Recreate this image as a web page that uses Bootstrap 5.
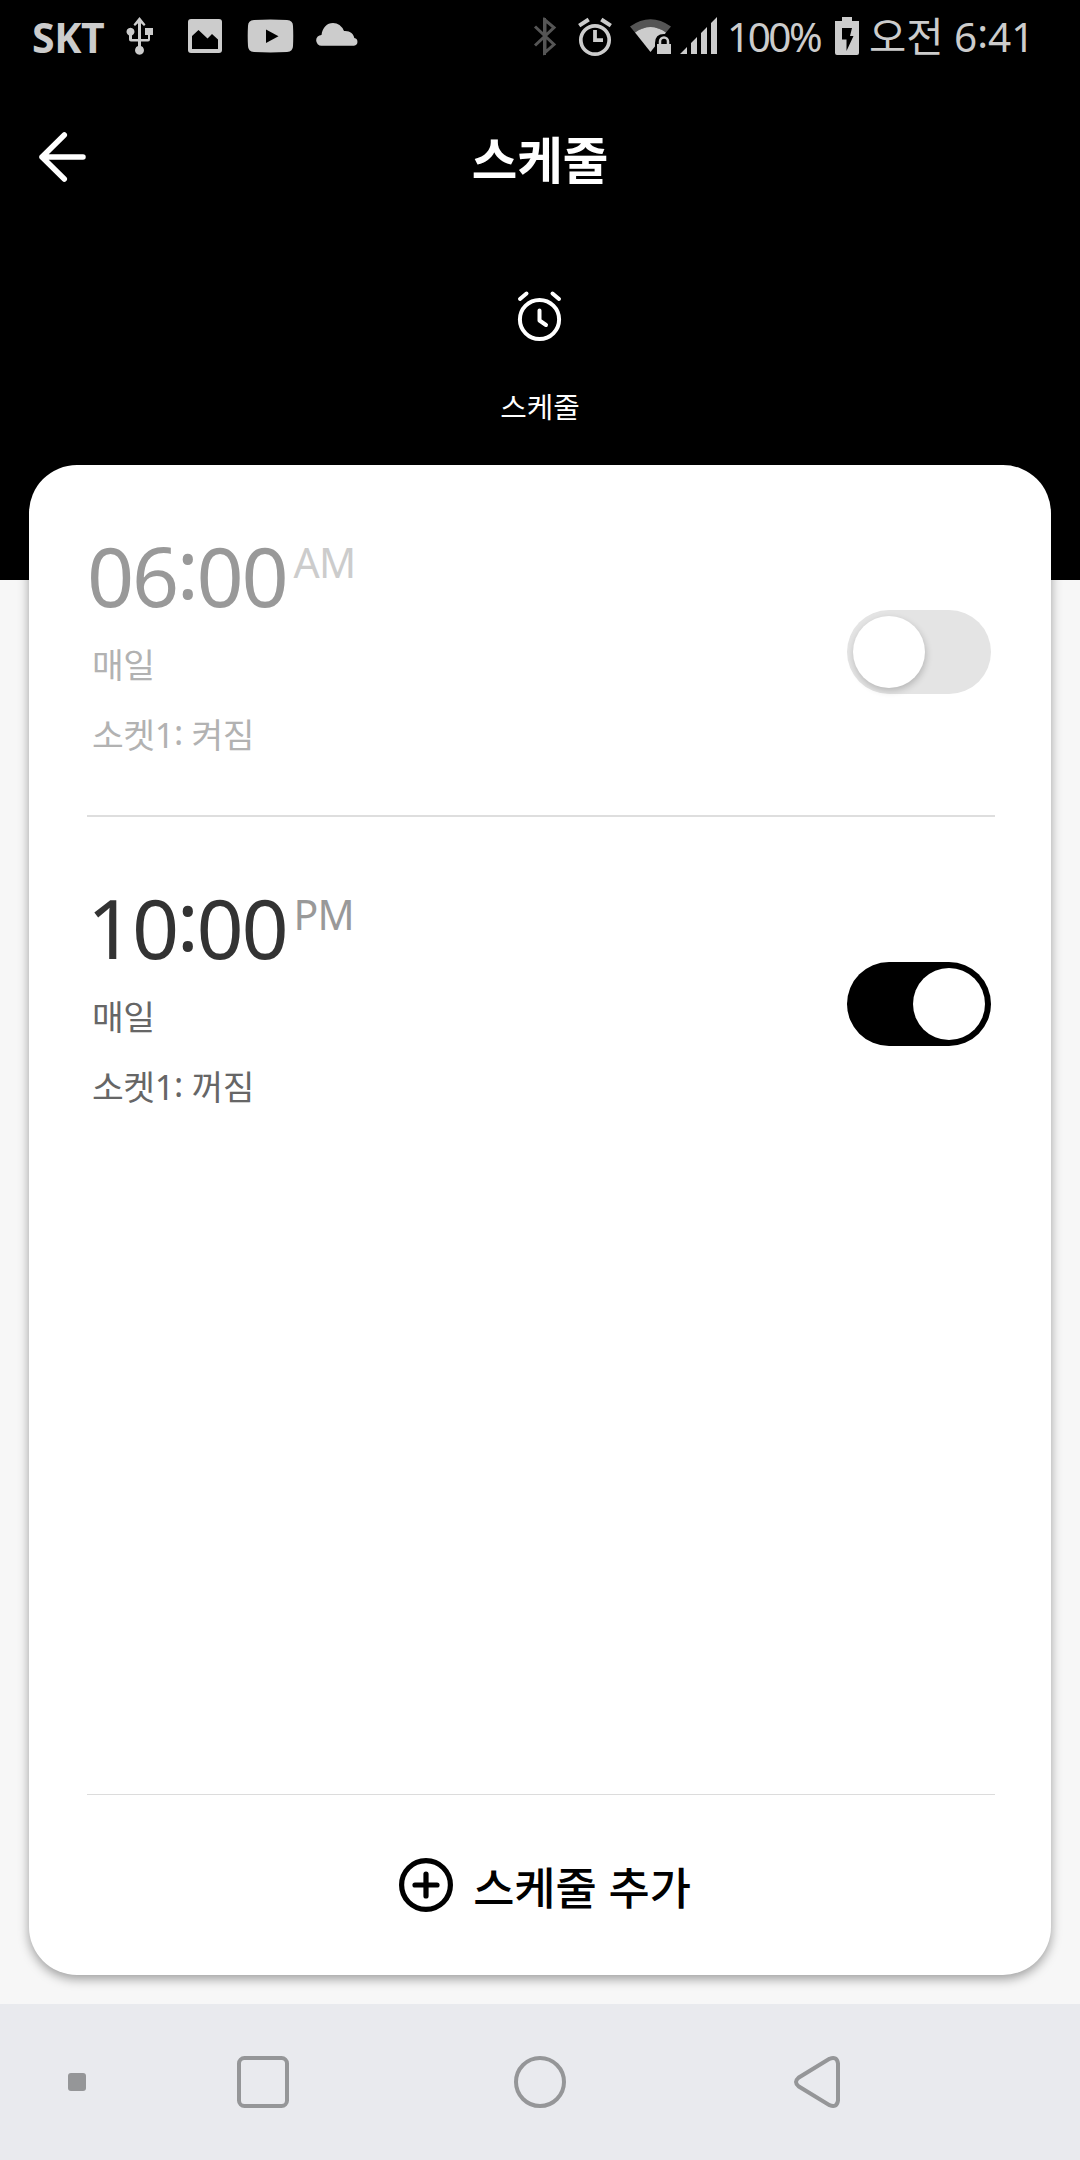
<!DOCTYPE html>
<html lang="ko">
<head>
<meta charset="utf-8">
<meta name="viewport" content="width=device-width, initial-scale=1">
<title>스케줄</title>
<link href="https://cdn.jsdelivr.net/npm/bootstrap@5.3.0/dist/css/bootstrap.min.css" rel="stylesheet">
<style>
  html, body { height: 100%; }
  body { width: 1080px; height: 2160px; background: #f7f7f7; overflow: hidden;
    font-family: "Noto Sans", "Noto Sans CJK KR", sans-serif; }
  svg { display: block; flex: none; }
  .top-area { height: 580px; flex: none; }
  .status-bar { height: 74px; color: #ccc; font-size: 40.5px; line-height: 74px; padding-left: 32px; }
  .st-carrier { width: 88px; font-weight: 700; font-size: 41px; letter-spacing: -.4px; }
  .st-battery { width: 105px; letter-spacing: -2.5px; padding-left: 2px; }
  .st-clock { font-size: 40.5px; padding-left: 4px; }
  .colon { vertical-align: .095em; line-height: 0; }
  .app-bar { height: 173px; }
  .bar-side { width: 120px; }
  .bar-title { font-size: 49.5px; line-height: 60px; font-weight: 700; padding-bottom: 2px; }
  .hero-label { font-size: 28.8px; line-height: 40px; margin-top: 44px; }
  .sheet { margin: -115px 29px 29px; border-radius: 48px; padding: 0 56px 0 58px;
    box-shadow: 0 4px 11px rgba(0,0,0,.37); min-height: 0; }
  .sched { height: 352px; padding-top: 64px; flex: none; }
  .sched-line { border-bottom: 2px solid #dedede; }
  .time-num { width: 206px; font-size: 82.5px; line-height: 92px; letter-spacing: -2.3px; color: #333; }
  .time-ap { font-size: 41px; line-height: 66px; letter-spacing: -.8px; color: #999; padding-left: .5px; }
  .detail { font-size: 34.5px; line-height: 70px; padding-left: 5px; color: #666; letter-spacing: -.4px; }
  .detail-first { margin-top: 9px; }
  .is-off .time-num { color: #999; }
  .is-off .time-ap { color: #ccc; }
  .is-off .detail { color: #b2b2b2; }
  .toggle { width: 144px; height: 84px; border-radius: 42px; padding: 6px; margin: 81px 4px 0 0; background: #000; }
  .knob { width: 72px; height: 72px; border-radius: 50%; background: #fff; }
  .is-off .toggle { background: #e4e4e4; }
  .is-off .knob { box-shadow: 1px 3px 7px rgba(0,0,0,.2); }
  .add-btn { height: 181px; border: 0; border-top: 1px solid #dcdcdc; border-radius: 0; padding: 6px 0 0 8px; color: #000; gap: 20px;
    font-size: 44.8px; line-height: 60px; font-weight: 500; }
  .nav-keys { height: 156px; background: #e9eaee; flex: none; padding-left: 30px; }
</style>
</head>
<body class="d-flex flex-column">
<header class="top-area bg-black text-white">
  <div class="status-bar d-flex text-nowrap">
    <span class="st-carrier">SKT</span>
    <svg width="50" height="74" viewBox="120 0 50 74" fill="#ccc"><path d="M139.5 17l6 7.5-1.5 1.5-3-2.700V39h7v-4h-3v-7h8v7h-3v4.500q0 2-2 2h-7V46a4.500 4.500 0 1 1-3 0v-4.500h-7q-2 0-2-2V35.500a4 4 0 1 1 3 0V39h6V23.300l-3 2.700-1.500-1.500z"/></svg>
    <svg width="65" height="74" viewBox="170 0 65 74"><rect x="188" y="19" width="34" height="34" rx="3" fill="#ccc"/><path d="M192 49V36l6.500-6 9 8.500 4.500-4.500 6 5.500V49z" fill="#000"/></svg>
    <svg width="70" height="74" viewBox="235 0 70 74"><path d="M254 20q16.500-1 33 0 6 .5 6 6 .500 10 0 20 0 5.500-6 6-16.500 .8-33 0-6-.5-6-6-.6-10 0-20 0-5.500 6-6z" fill="#ccc"/><path d="M266 29.500v13.500l12.500-6.700z" fill="#000"/></svg>
    <svg width="220" height="74" viewBox="305 0 220 74"><path d="M321.500 45.700a5.300 5.300 0 0 1 0-10.700C322.500 27.500 327 23 333 23Q340.500 23 344 31C350 30.500 353.500 33.500 354.300 38A3.900 3.900 0 0 1 354 45.700z" fill="#ccc"/></svg>
    <svg width="45" height="74" viewBox="525 0 45 74"><path d="M535 26.500L554 44.500 545 52.500V20L554 27.500 535 45.500" fill="none" stroke="#555" stroke-width="3"/><path d="M543 18h3v37h-3z" fill="#555"/></svg>
    <svg width="50" height="74" viewBox="570 0 50 74" fill="none" stroke="#ccc"><circle cx="595" cy="40" r="14.200" stroke-width="3.700"/><path d="M595 30v10.200h8" stroke-width="3.800"/><path d="M579.200 25.700l9.500-6.200M610.800 25.700l-9.500-6.200" stroke-width="4"/></svg>
    <svg width="55" height="74" viewBox="620 0 55 74"><path d="M630 26.500Q650.500 12 671 26.500L666 32.500Q650.500 21.500 635 32.500z" fill="#555"/><path d="M635 32.500Q650.500 21.500 666 32.500L650.500 52z" fill="#ccc"/><path d="M655 54V43q0-9 9-9t9 9v11z" fill="#000"/><path d="M657 44h14v10h-14z" fill="#ccc"/><path d="M660 45v-3.500a4 4 0 0 1 8 0V45" fill="none" stroke="#ccc" stroke-width="2.500"/></svg>
    <svg width="50" height="74" viewBox="675 0 50 74" fill="#ccc"><path d="M680 54l7-7v7zM691 54V43l6-6v17zM701 54V33l6-6v27zM711 54V23l6-6v37z"/></svg>
    <span class="st-battery">100%</span>
    <svg width="35" height="74" viewBox="830 0 35 74"><path d="M842 17h10v4h7v32q0 2-2 2h-20q-2 0-2-2V21h7z" fill="#ccc"/><path d="M842 28h10l-2 8h3.500l-7 15V39.500H842z" fill="#000"/></svg>
    <span class="st-clock">오전 6<span class="colon">:</span>41</span>
  </div>
  <div class="app-bar d-flex align-items-center">
    <div class="bar-side"><svg width="120" height="70" viewBox="0 125.500 120 70" fill="none" stroke="#fff" stroke-width="5.500" stroke-linecap="round" stroke-linejoin="round"><path d="M64.300 134.500L42 156.500l22.300 22M42 156.500h41"/></svg></div>
    <div class="bar-title flex-grow-1 text-center">스케줄</div>
    <div class="bar-side"></div>
  </div>
  <div class="d-flex flex-column align-items-center">
    <svg width="60" height="96" viewBox="510 247 60 96" fill="none" stroke="#fff" stroke-width="4" stroke-linecap="round" stroke-linejoin="round"><circle cx="539.500" cy="319.500" r="19.600"/><path d="M539.500 310.500v10l6.500 4.500M520 299l6.500-5.500M559 299l-6.500-5.500"/></svg>
    <div class="hero-label">스케줄</div>
  </div>
</header>
<main class="sheet bg-white d-flex flex-column flex-grow-1">
  <section class="sched sched-line is-off d-flex justify-content-between">
    <div>
      <div class="d-flex align-items-start text-nowrap"><span class="time-num">06<span class="colon">:</span>00</span><span class="time-ap">AM</span></div>
      <div class="detail detail-first">매일</div>
      <div class="detail">소켓1<span class="colon">:</span> 켜짐</div>
    </div>
    <div class="toggle d-flex justify-content-start" role="switch" aria-checked="false"><div class="knob"></div></div>
  </section>
  <section class="sched d-flex justify-content-between">
    <div>
      <div class="d-flex align-items-start text-nowrap"><span class="time-num">10<span class="colon">:</span>00</span><span class="time-ap">PM</span></div>
      <div class="detail detail-first">매일</div>
      <div class="detail">소켓1<span class="colon">:</span> 꺼짐</div>
    </div>
    <div class="toggle d-flex justify-content-end" role="switch" aria-checked="true"><div class="knob"></div></div>
  </section>
  <button type="button" class="add-btn btn mt-auto w-100 d-flex align-items-center justify-content-center">
    <svg width="54" height="60" viewBox="399 1858 54 60" fill="none" stroke="#000"><circle cx="426" cy="1885" r="24.400" stroke-width="5.200"/><path d="M426 1874v22M415 1885h22" stroke-width="5.200" stroke-linecap="round"/></svg>
    <span>스케줄 추가</span>
  </button>
</main>
<nav class="nav-keys d-flex align-items-center" aria-label="navigation">
  <svg width="94" height="60" viewBox="-47 -30 94 60"><rect x="-9" y="-9" width="18" height="18" rx="3" fill="#959698"/></svg>
  <svg width="278" height="60" viewBox="-139 -30 278 60" fill="none" stroke="#959698" stroke-width="4"><rect x="-24" y="-24" width="48" height="48" rx="5.500"/></svg>
  <svg width="276" height="60" viewBox="-138 -30 276 60" fill="none" stroke="#959698" stroke-width="4"><circle r="24"/></svg>
  <svg width="278" height="60" viewBox="-139 -30 278 60" fill="none" stroke="#959698" stroke-width="4"><path d="M12.500-23.200L-18.500-4.300Q-23.500 0-18.500 4.300L12.500 23.200Q20 26 21 18.500V-18.500Q20-26 12.500-23.200z"/></svg>
</nav>
<script src="https://cdn.jsdelivr.net/npm/bootstrap@5.3.0/dist/js/bootstrap.bundle.min.js"></script>
</body>
</html>
